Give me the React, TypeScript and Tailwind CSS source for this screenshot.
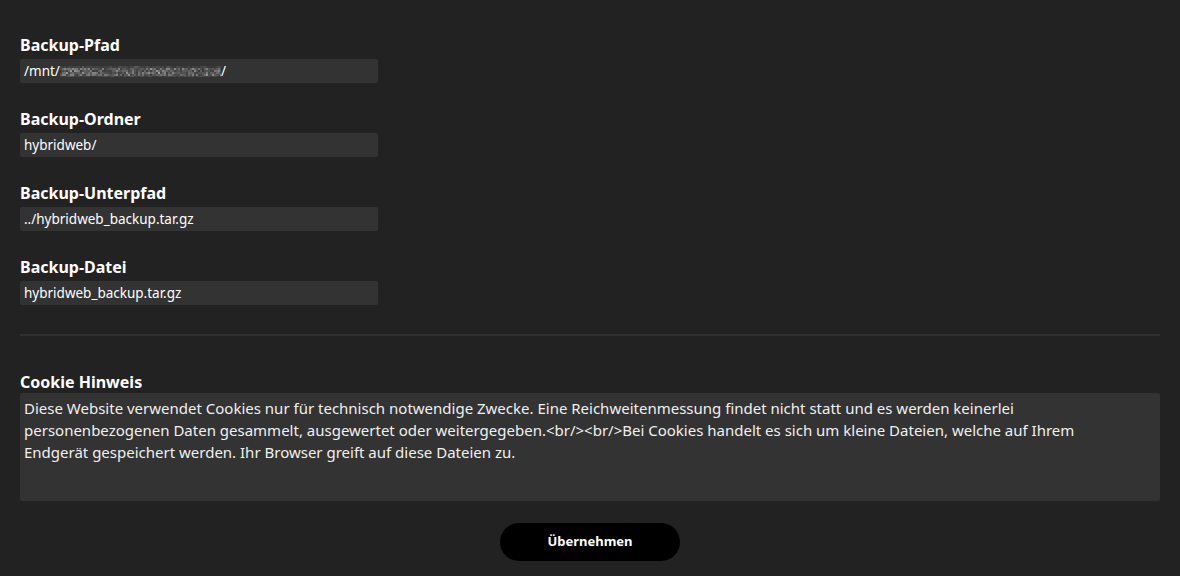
import React from "react";

type FieldProps = {
	label: string;
	value?: string;
	children?: React.ReactNode;
};

function Field({ label, value, children }: FieldProps) {
	return (
		<div className="flex flex-col">
			<label className="text-[16px] leading-[20px] font-bold text-white mb-[4px]">
				{label}
			</label>
			<div className="w-[358px] h-[24px] bg-[#333333] rounded-[2px] px-[4px] flex items-center text-[13.5px] text-white">
				{children ?? value}
			</div>
		</div>
	);
}

// pixelated noise standing in for the redacted part of the path
function Blur() {
	const cells: React.ReactNode[] = [];
	let seed = 7;
	const rnd = () => {
		seed = (seed * 9301 + 49297) % 233280;
		return seed / 233280;
	};
	for (let y = 0; y < 11; y += 2) {
		for (let x = 0; x < 161; x += 2) {
			const v = Math.floor(70 + rnd() * 110);
			const edge = y === 0 || y === 10 ? 0.4 : 1;
			cells.push(
				<rect
					key={`${x}-${y}`}
					x={x}
					y={y}
					width={2}
					height={2}
					fill={`rgb(${v},${v},${v})`}
					opacity={(0.35 + rnd() * 0.5) * edge}
				/>
			);
		}
	}
	return (
		<svg width="161" height="11" viewBox="0 0 161 11" className="inline-block">
			{cells}
		</svg>
	);
}

export default function App() {
	const cookieText =
		"Diese Website verwendet Cookies nur für technisch notwendige Zwecke. Eine Reichweitenmessung findet nicht statt und es werden keinerlei personenbezogenen Daten gesammelt, ausgewertet oder weitergegeben.<br/><br/>Bei Cookies handelt es sich um kleine Dateien, welche auf Ihrem Endgerät gespeichert werden. Ihr Browser greift auf diese Dateien zu.";

	return (
		<div
			className="w-[1180px] h-[576px] bg-[#222222] px-[20px] pt-[35px] overflow-hidden"
			style={{ fontFamily: '"Noto Sans", "Open Sans", sans-serif' }}
		>
			<div className="flex flex-col gap-[26px]">
				<Field label="Backup-Pfad">
					<span>/mnt/</span>
					<Blur />
					<span>/</span>
				</Field>
				<Field label="Backup-Ordner" value="hybridweb/" />
				<Field label="Backup-Unterpfad" value="../hybridweb_backup.tar.gz" />
				<Field label="Backup-Datei" value="hybridweb_backup.tar.gz" />
			</div>

			<div className="h-[2px] bg-[#303030] mt-[29px]" />

			<div className="mt-[36px] flex flex-col">
				<label className="text-[16px] leading-[20px] font-bold text-white mb-[1px]">
					Cookie Hinweis
				</label>
				<textarea
					readOnly
					value={cookieText}
					className="w-full h-[108px] bg-[#333333] text-[#f0f0f0] text-[15px] leading-[22px] pl-[4px] pr-[60px] py-[4px] resize-none outline-none rounded-[2px]"
					style={{ fontFamily: '"Noto Sans", "Open Sans", sans-serif' }}
				/>
			</div>

			<div className="flex justify-center mt-[22px]">
				<button className="w-[180px] h-[38px] rounded-full bg-black text-white text-[13px] font-bold">
					Übernehmen
				</button>
			</div>
		</div>
	);
}
